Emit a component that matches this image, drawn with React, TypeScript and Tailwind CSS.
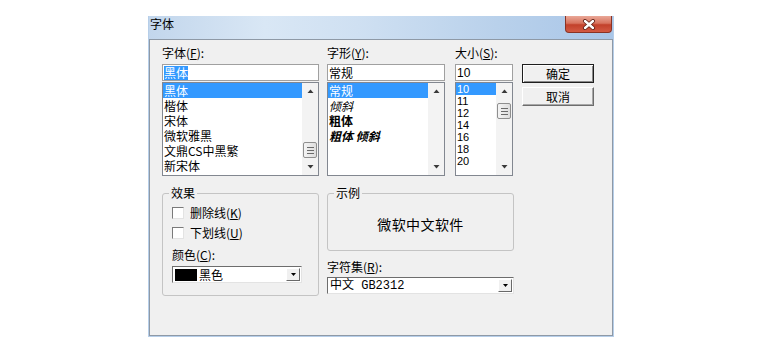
import React from 'react'

// Classic Win7 "字体" font dialog

const cjk = "font-['Noto_Sans_CJK_SC',sans-serif]"
const latin = "font-['Liberation_Sans','Noto_Sans_CJK_SC',sans-serif]"

function Arrow({ dir }: { dir: 'up' | 'down' }) {
  return (
    <svg width="7" height="4" viewBox="0 0 7 4">
      {dir === 'up' ? (
        <path d="M0.5 4 L3.5 0.5 L6.5 4 Z" fill="#3a3a3a" />
      ) : (
        <path d="M0.5 0 L6.5 0 L3.5 3.5 Z" fill="#3a3a3a" />
      )}
    </svg>
  )
}

function ScrollBar({ thumbClass }: { thumbClass?: string }) {
  return (
    <div className="flex w-[16px] shrink-0 flex-col bg-[#f3f3f3]">
      <div className="flex h-[16px] items-center justify-center">
        <Arrow dir="up" />
      </div>
      <div className="flex-1">
        {thumbClass && (
          <div
            className={`${thumbClass} mx-auto flex h-[16px] w-[14px] flex-col items-center justify-center gap-[2px] rounded-[2px] border border-[#8f8f8f] bg-[linear-gradient(90deg,#f4f4f4,#dedede)]`}
          >
            <div className="h-px w-[7px] bg-[#6a6a6a]" />
            <div className="h-px w-[7px] bg-[#6a6a6a]" />
            <div className="h-px w-[7px] bg-[#6a6a6a]" />
          </div>
        )}
      </div>
      <div className="flex h-[16px] items-center justify-center">
        <Arrow dir="down" />
      </div>
    </div>
  )
}

function Label({ text, k, after = '):' }: { text: string; k: string; after?: string }) {
  return (
    <div className="h-[16px] leading-[16px]">
      {text}(<u>{k}</u>{after}
    </div>
  )
}

function ComboButton() {
  return (
    <div className="flex h-[13px] w-[14px] shrink-0 items-center justify-center border border-b-[#696969] border-l-white border-r-[#696969] border-t-white bg-[#f0f0f0]">
      <svg width="5" height="3" viewBox="0 0 5 3">
        <path d="M0 0 L5 0 L2.5 3 Z" fill="#000" />
      </svg>
    </div>
  )
}

function CheckRow({ text, k }: { text: string; k: string }) {
  return (
    <div className="flex h-[16px] items-center gap-[6px]">
      <div className="h-[12px] w-[12px] border border-b-[#e3e3e3] border-l-[#7a7a7a] border-r-[#e3e3e3] border-t-[#7a7a7a] bg-white" />
      <span className="leading-[16px]">
        {text}(<u>{k}</u>)
      </span>
    </div>
  )
}

function CloseButton() {
  return (
    <div className="mr-[1px] flex h-[17px] w-[47px] items-center justify-center rounded-b-[4px] border border-t-0 border-[#8a3324] bg-[linear-gradient(180deg,#eaa898_0%,#d8745f_45%,#c2412b_55%,#d35a43_100%)]">
      <svg width="14" height="11" viewBox="0 0 14 11">
        <path d="M3 2 L11 9 M11 2 L3 9" stroke="#5c1d14" strokeWidth="4" strokeLinecap="round" />
        <path d="M3 2 L11 9 M11 2 L3 9" stroke="#ffffff" strokeWidth="2.4" strokeLinecap="round" />
      </svg>
    </div>
  )
}

const fonts = ['黑体', '楷体', '宋体', '微软雅黑', '文鼎CS中黑繁', '新宋体']
const styles = [
  { label: '常规', cls: '' },
  { label: '倾斜', cls: 'italic' },
  { label: '粗体', cls: 'font-bold' },
  { label: '粗体 倾斜', cls: 'font-bold italic' },
]
const sizes = ['10', '11', '12', '14', '16', '18', '20']

export default function App() {
  return (
    <div className={`${cjk} h-[362px] w-[761px] overflow-hidden bg-white pl-[148px] pt-[16px] text-[12px] text-black`}>
      <div className="flex h-[321px] w-[466px] flex-col border-x border-b border-[#b6cee9] bg-[linear-gradient(90deg,#c2d6ec_0%,#d9e7f5_25%,#cfe0f2_45%,#b9d1eb_75%,#a9c6e8_100%)]">
        {/* title bar */}
        <div className="flex h-[23px] shrink-0 items-start justify-between">
          <span className="ml-[1px] mt-[1px] leading-[14px]">字体</span>
          <CloseButton />
        </div>

        {/* client */}
        <div className="flex-1 border border-[#8e99a6] bg-[#f0f0f0] pl-[12px] pt-[5px]">
          <div className="flex">
            {/* font name */}
            <div className="w-[157px]">
              <Label text="字体" k="F" />
              <div className="mt-[3px] flex h-[17px] items-center border border-[#a0a0a0] bg-white pl-px">
                <span className="bg-[#3399ff] leading-[14px] text-white">黑体</span>
              </div>
              <div className="mt-px flex h-[94px] border border-[#828790] bg-white">
                <div className="flex-1">
                  {fonts.map((f, i) => (
                    <div
                      key={f}
                      className={`h-[15px] pl-px leading-[15px] ${i === 0 ? 'bg-[#3399ff] text-white' : ''}`}
                    >
                      {f}
                    </div>
                  ))}
                </div>
                <ScrollBar thumbClass="mt-[43px]" />
              </div>
            </div>

            {/* style */}
            <div className="ml-[8px] w-[118px]">
              <Label text="字形" k="Y" />
              <div className="mt-[3px] flex h-[17px] items-center border border-[#a0a0a0] bg-white pl-px leading-[14px]">
                常规
              </div>
              <div className="mt-px flex h-[94px] border border-[#828790] bg-white">
                <div className="flex-1">
                  {styles.map((s, i) => (
                    <div
                      key={s.label}
                      className={`h-[15px] pl-px leading-[15px] ${s.cls} ${i === 0 ? 'bg-[#3399ff] text-white' : ''}`}
                    >
                      {s.label}
                    </div>
                  ))}
                </div>
                <ScrollBar />
              </div>
            </div>

            {/* size */}
            <div className="ml-[10px] w-[58px]">
              <Label text="大小" k="S" />
              <div className={`${latin} mt-[3px] flex h-[17px] items-center border border-[#a0a0a0] bg-white pl-px leading-[14px]`}>
                10
              </div>
              <div className="mt-px flex h-[94px] border border-[#828790] bg-white">
                <div className={`${latin} flex-1 text-[11px]`}>
                  {sizes.map((s, i) => (
                    <div
                      key={s}
                      className={`h-[12px] pl-px leading-[12px] ${i === 0 ? 'bg-[#3399ff] text-white' : ''}`}
                    >
                      {s}
                    </div>
                  ))}
                </div>
                <ScrollBar thumbClass="mt-[4px]" />
              </div>
            </div>

            {/* buttons */}
            <div className="ml-[9px] mt-[19px] flex w-[72px] flex-col gap-[4px]">
              <div className="flex h-[19px] items-center justify-center border border-[#1e1e1e] bg-[#f0f0f0] leading-[14px] shadow-[inset_1px_1px_0_#ffffff,inset_-1px_-1px_0_#8a8a8a]">
                确定
              </div>
              <div className="flex h-[19px] items-center justify-center border border-b-[#6d6d6d] border-l-white border-r-[#6d6d6d] border-t-white bg-[#f0f0f0] leading-[14px] shadow-[inset_-1px_-1px_0_#a8a8a8]">
                取消
              </div>
            </div>
          </div>

          <div className="mt-[10px] flex">
            {/* effects */}
            <fieldset className="h-[110px] w-[157px] rounded-[3px] border border-[#c4c4c4]">
              <legend className="ml-[6px] px-[2px] leading-[14px]">效果</legend>
              <div className="pl-[9px] pt-[5px]">
                <CheckRow text="删除线" k="K" />
                <div className="mt-[4px]">
                  <CheckRow text="下划线" k="U" />
                </div>
                <div className="mt-[6px]">
                  <Label text="颜色" k="C" />
                </div>
                <div className="mt-[3px] flex h-[17px] w-[130px] items-center border border-b-[#e3e3e3] border-l-[#6d6d6d] border-r-[#e3e3e3] border-t-[#6d6d6d] bg-white pl-[2px] pr-px">
                  <div className="h-[12px] w-[22px] bg-black" />
                  <span className="ml-[2px] flex-1 leading-[14px]">黑色</span>
                  <ComboButton />
                </div>
              </div>
            </fieldset>

            {/* sample + charset */}
            <div className="ml-[8px] w-[187px]">
              <fieldset className="h-[65px] rounded-[3px] border border-[#c4c4c4]">
                <legend className="ml-[6px] px-[2px] leading-[14px]">示例</legend>
                <div className="flex h-[49px] items-center justify-center text-[14px] tracking-[0.4px]">
                  微软中文软件
                </div>
              </fieldset>
              <div className="mt-[8px]">
                <Label text="字符集" k="R" />
              </div>
              <div className="mt-[2px] flex h-[17px] items-center border border-b-[#e3e3e3] border-l-[#6d6d6d] border-r-[#e3e3e3] border-t-[#6d6d6d] bg-white pl-[2px] pr-px">
                <span className="flex-1 font-['Liberation_Mono','Noto_Sans_CJK_SC',monospace] leading-[14px]">
                  中文 GB2312
                </span>
                <ComboButton />
              </div>
            </div>
          </div>
        </div>
      </div>
    </div>
  )
}
